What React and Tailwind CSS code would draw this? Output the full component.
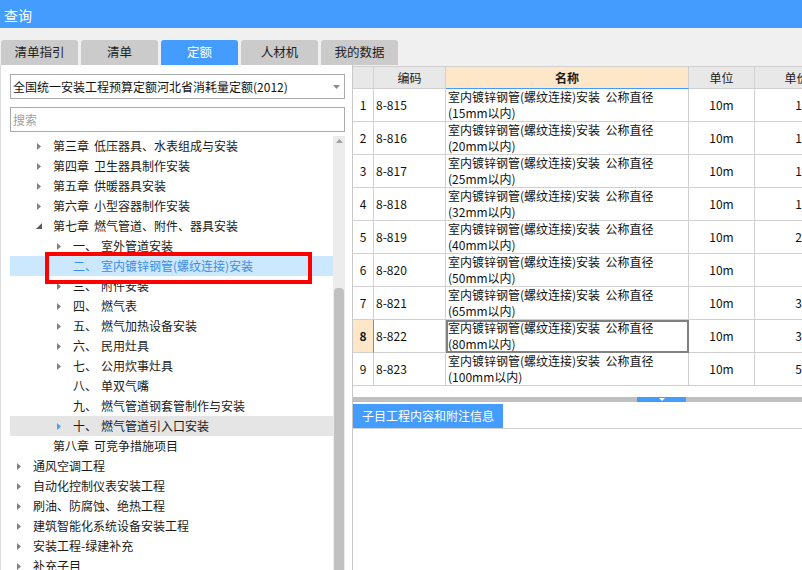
import React from 'react';

const FONT = '"Noto Sans CJK SC", "Noto Sans", sans-serif';

const tabs = ['清单指引', '清单', '定额', '人材机', '我的数据'];

const tree = [
  { l: 1, a: 'r', c: '第三章', t: '低压器具、水表组成与安装' },
  { l: 1, a: 'r', c: '第四章', t: '卫生器具制作安装' },
  { l: 1, a: 'r', c: '第五章', t: '供暖器具安装' },
  { l: 1, a: 'r', c: '第六章', t: '小型容器制作安装' },
  { l: 1, a: 'd', c: '第七章', t: '燃气管道、附件、器具安装' },
  { l: 2, a: 'r', n: '一、', t: '室外管道安装' },
  { l: 2, n: '二、', t: '室内镀锌钢管(螺纹连接)安装', sel: true },
  { l: 2, a: 'r', n: '三、', t: '附件安装' },
  { l: 2, a: 'r', n: '四、', t: '燃气表' },
  { l: 2, a: 'r', n: '五、', t: '燃气加热设备安装' },
  { l: 2, a: 'r', n: '六、', t: '民用灶具' },
  { l: 2, a: 'r', n: '七、', t: '公用炊事灶具' },
  { l: 2, n: '八、', t: '单双气嘴' },
  { l: 2, n: '九、', t: '燃气管道钢套管制作与安装' },
  { l: 2, a: 'b', n: '十、', t: '燃气管道引入口安装', hov: true },
  { l: 1, c: '第八章', t: '可竞争措施项目' },
  { l: 0, a: 'r', t: '通风空调工程' },
  { l: 0, a: 'r', t: '自动化控制仪表安装工程' },
  { l: 0, a: 'r', t: '刷油、防腐蚀、绝热工程' },
  { l: 0, a: 'r', t: '建筑智能化系统设备安装工程' },
  { l: 0, a: 'r', t: '安装工程-绿建补充' },
  { l: 0, a: 'r', t: '补充子目' },
];

const pads = ['pl-[1px]', 'pl-[21px]', 'pl-[41px]'];

const rows = [
  ['8-815', '15', '130.12'],
  ['8-816', '20', '141.05'],
  ['8-817', '25', '165.47'],
  ['8-818', '32', '183.62'],
  ['8-819', '40', '221.08'],
  ['8-820', '50', '98.76'],
  ['8-821', '65', '305.44'],
  ['8-822', '80', '367.15'],
  ['8-823', '100', '512.30'],
];

function Arrow({ type }) {
  if (type === 'r')
    return (
      <svg width="4" height="7" viewBox="0 0 4 7">
        <polygon points="0,0 4,3.5 0,7" fill="#808080" />
      </svg>
    );
  if (type === 'b')
    return (
      <svg width="4" height="7" viewBox="0 0 4 7">
        <polygon points="0,0 4,3.5 0,7" fill="#4ea1f3" />
      </svg>
    );
  if (type === 'd')
    return (
      <svg width="6" height="6" viewBox="0 0 6 6">
        <polygon points="6,0 6,6 0,6" fill="#5a5a5a" />
      </svg>
    );
  return null;
}

function TreeRow({ item }) {
  const bg = item.sel ? 'bg-[#cce8ff]' : item.hov ? 'bg-[#e5e5e5]' : '';
  const color = item.sel ? 'text-[#3a8de6]' : 'text-[#1a1a1a]';
  return (
    <div className={`flex items-center h-[20px] whitespace-nowrap ${pads[item.l]} ${bg} ${color}`}>
      <div className="w-[16px] mr-[6px] flex items-center justify-center">
        <Arrow type={item.a} />
      </div>
      {item.n && <span className="w-[28px]">{item.n}</span>}
      {item.c && <span className="mr-[5px]">{item.c}</span>}
      <span>{item.t}</span>
    </div>
  );
}

export default function App() {
  return (
    <div
      className="w-[802px] h-[570px] overflow-hidden bg-[#f0f0f0] text-[12px]"
      style={{ fontFamily: FONT }}
    >
      {/* title bar */}
      <div className="h-[28px] bg-[#459cff] text-white text-[14px] flex items-center pl-[4px] pt-[2px]">
        查询
      </div>

      {/* tabs */}
      <div className="flex gap-[3px] pl-[1px] pt-[12px]">
        {tabs.map((t) => (
          <div
            key={t}
            className={`w-[77px] h-[25px] rounded-t-[3px] flex items-center justify-center text-[12.5px] ${
              t === '定额' ? 'bg-[#459cff] text-white' : 'bg-[#cbcbcb] text-[#222]'
            }`}
          >
            {t}
          </div>
        ))}
      </div>

      {/* body */}
      <div className="flex h-[505px]">
        {/* left panel */}
        <div className="w-[353px] shrink-0 bg-white border-l border-r border-l-[#dcdcdc] border-r-[#c8c8c8] flex flex-col">
          <div className="ml-[9px] mt-[9px] w-[335px] h-[25px] border border-[#ababab] flex items-center pl-[2px] pr-[4px] text-[#111]">
            <span className="flex-1 whitespace-nowrap">全国统一安装工程预算定额河北省消耗量定额(2012)</span>
            <svg width="7" height="4" viewBox="0 0 7 4">
              <polygon points="0,0 7,0 3.5,4" fill="#8a8a8a" />
            </svg>
          </div>
          <div className="ml-[9px] mt-[8px] w-[335px] h-[25px] border border-[#ababab] flex items-center pl-[2px] text-[#a0a0a0]">
            搜索
          </div>
          <div className="flex mt-[4px] flex-1 min-h-0 ml-[9px]">
            <div className="relative w-[323px] overflow-hidden">
              {tree.map((it, i) => (
                <TreeRow key={i} item={it} />
              ))}
              <div className="absolute left-[35px] top-[116px] w-[267px] h-[32px] border-[4px] border-[#ff0000]" />
            </div>
            <div className="w-[12px] bg-[#ececec] flex flex-col px-[1px]">
              <div className="h-[10px] flex items-center justify-center">
                <svg width="7" height="4" viewBox="0 0 7 4">
                  <polygon points="3.5,0 7,4 0,4" fill="#a0a0a0" />
                </svg>
              </div>
              <div className="h-[142px]" />
              <div className="flex-1 bg-[#c1c1c1] rounded-t-[4px]" />
            </div>
          </div>
        </div>

        {/* right panel */}
        <div className="flex-1 min-w-0 overflow-hidden bg-white border-t border-[#d0d0d0] mt-[1px] flex flex-col">
          {/* header */}
          <div className="flex h-[22px] shrink-0 text-[#1a1a1a] whitespace-nowrap">
            <div className="w-[21px] shrink-0 bg-[#e8e8e8] border-r border-b border-[#d0d0d0]" />
            <div className="w-[72px] shrink-0 bg-[#e8e8e8] border-r border-b border-[#d0d0d0] flex items-center justify-center">编码</div>
            <div className="w-[243px] shrink-0 bg-[#fee6c8] border-r border-b border-r-[#d0d0d0] border-b-[#4499ff] flex items-center justify-center font-bold">名称</div>
            <div className="w-[66px] shrink-0 bg-[#e8e8e8] border-r border-b border-[#d0d0d0] flex items-center justify-center">单位</div>
            <div className="w-[84px] shrink-0 bg-[#e8e8e8] border-r border-b border-[#d0d0d0] flex items-center justify-center">单价</div>
          </div>
          {/* rows */}
          {rows.map(([code, size, price], i) => {
            const sel = i === 7;
            return (
              <div key={code} className="flex h-[33px] shrink-0 text-[#111] whitespace-nowrap">
                <div
                  className={`w-[21px] shrink-0 border-r border-b border-[#d0d0d0] flex items-center justify-center ${
                    sel ? 'bg-[#fee6c8] font-bold border-r-[#4499ff]' : ''
                  }`}
                >
                  {i + 1}
                </div>
                <div className="w-[72px] shrink-0 border-r border-b border-[#d0d0d0] flex items-center pl-[2px]">{code}</div>
                <div
                  className={`w-[243px] shrink-0 border-r border-b border-[#d0d0d0] flex flex-col justify-center pl-[2px] leading-[16px] ${
                    sel ? 'outline-2 -outline-offset-2 outline-[#808080]' : ''
                  }`}
                >
                  <span className="whitespace-pre">室内镀锌钢管(螺纹连接)安装  公称直径</span>
                  <span>({size}mm以内)</span>
                </div>
                <div className="w-[66px] shrink-0 border-r border-b border-[#d0d0d0] flex items-center justify-center">10m</div>
                <div className="w-[84px] shrink-0 border-r border-b border-[#d0d0d0] flex items-center justify-end pr-[6px]">{price}</div>
              </div>
            );
          })}
          <div className="h-[11px] shrink-0" />
          {/* splitter */}
          <div className="h-[5px] shrink-0 bg-[#c0c0c0] flex">
            <div className="ml-[284px] w-[49px] bg-[#459cff] flex items-center justify-center">
              <svg width="6" height="3" viewBox="0 0 6 3">
                <polygon points="0,0 6,0 3,3" fill="#ffffff" />
              </svg>
            </div>
          </div>
          {/* sub tab */}
          <div className="pt-[2px] shrink-0 border-b border-[#d0d0d0] flex">
            <div className="w-[150px] h-[24px] bg-[#459cff] text-white flex items-center justify-center">
              子目工程内容和附注信息
            </div>
          </div>
          <div className="flex-1" />
        </div>
      </div>
    </div>
  );
}
